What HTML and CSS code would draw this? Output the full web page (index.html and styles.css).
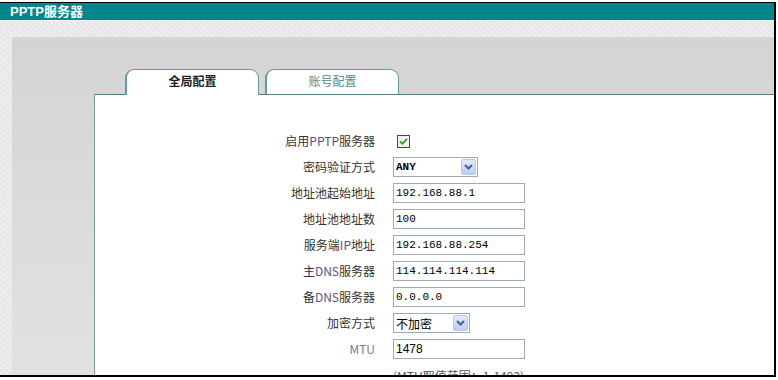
FILE: index.html
```html
<!DOCTYPE html>
<html lang="zh-cn">
  <head>
    <meta charset="utf-8">
    <title>PPTP服务器</title>
    <link rel="stylesheet" href="styles.css">
  </head>
  <body>
    <div class="frame">
      <div class="title">PPTP服务器</div>
      <div class="page">
        <div class="panel">
          <div class="tabs">
            <div class="tab tab-on">全局配置</div>
            <div class="tab">账号配置</div>
          </div>
          <div class="content">
            <div class="form">
              <div class="lbl">启用<span class="en">PPTP</span>服务器</div>
              <div class="fld">
                <span class="chk">
                  <svg width="13" height="13" viewBox="0 0 13 13">
                    <rect x="0.5" y="0.5" width="12" height="12" fill="#f2f2ee" stroke="#2a4f72"/>
                    <path d="M3 6.3l2.4 2.5L10 3.8" fill="none" stroke="#22a022" stroke-width="1.8"/>
                  </svg>
                </span>
              </div>

              <div class="lbl">密码验证方式</div>
              <div class="fld">
                <span class="sel sel-auth">
                  <select class="sel-box sel-any"><option>ANY</option><option>PAP</option><option>CHAP</option></select>
                  <span class="sel-btn">
                    <svg width="9" height="6" viewBox="0 0 9 6"><path d="M1 1l3.5 3.5L8 1" fill="none" stroke="#4d6185" stroke-width="2"/></svg>
                  </span>
                </span>
              </div>

              <div class="lbl">地址池起始地址</div>
              <div class="fld"><input class="txt" type="text" value="192.168.88.1"></div>

              <div class="lbl">地址池地址数</div>
              <div class="fld"><input class="txt" type="text" value="100"></div>

              <div class="lbl">服务端<span class="en">IP</span>地址</div>
              <div class="fld"><input class="txt" type="text" value="192.168.88.254"></div>

              <div class="lbl">主<span class="en">DNS</span>服务器</div>
              <div class="fld"><input class="txt" type="text" value="114.114.114.114"></div>

              <div class="lbl">备<span class="en">DNS</span>服务器</div>
              <div class="fld"><input class="txt" type="text" value="0.0.0.0"></div>

              <div class="lbl">加密方式</div>
              <div class="fld">
                <span class="sel sel-enc">
                  <select class="sel-box"><option>不加密</option><option>MPPE</option></select>
                  <span class="sel-btn">
                    <svg width="9" height="6" viewBox="0 0 9 6"><path d="M1 1l3.5 3.5L8 1" fill="none" stroke="#4d6185" stroke-width="2"/></svg>
                  </span>
                </span>
              </div>

              <div class="lbl"><span class="en en-mtu">MTU</span></div>
              <div class="fld"><input class="txt txt-sans" type="text" value="1478"></div>

              <div class="lbl"></div>
              <div class="fld hint">(MTU取值范围：1-1492)</div>
            </div>
          </div>
        </div>
      </div>
    </div>
  </body>
</html>
```

FILE: styles.css
```css
body {
  margin: 0;
  background: #fff;
  font-family: "Noto Sans CJK SC", sans-serif;
}
.frame {
  margin-top: 2px;
  width: 774px;
  height: 372px;
  border-top: 1px solid #000;
  border-right: 2px solid #000;
  border-bottom: 2px solid #000;
  overflow: hidden;
  display: flex;
  flex-direction: column;
}
.title {
  height: 20px;
  padding-left: 10px;
  background: #00868b;
  border-bottom: 1px solid #eef8f8;
  color: #fff;
  font: bold 13px/17px "Liberation Sans", "Noto Sans CJK SC", sans-serif;
}
.page {
  flex: 1;
  display: flex;
  padding: 16px 0 0 12px;
  background: repeating-linear-gradient(45deg, #e6e6e6 0 2px, #eeeeee 2px 4px);
}
.panel {
  flex: 1;
  display: flex;
  flex-direction: column;
  padding: 32px 0 0 82px;
  background: linear-gradient(#d4d4d4, #e2e2e0);
}
.tabs {
  display: flex;
  align-items: flex-start;
  gap: 6px;
  margin-left: 31px;
  height: 26px;
  margin-bottom: -1px;
}
.tab {
  box-sizing: border-box;
  width: 134px;
  height: 26px;
  border: 1px solid #5f9e9e;
  border-left-width: 2px;
  border-bottom-color: #587e7e;
  border-radius: 9px 9px 0 0;
  background: #fff;
  text-align: center;
  font-size: 12px;
  line-height: 22px;
  color: #5a8c8c;
}
.tab-on {
  position: relative;
  z-index: 1;
  border-bottom: none;
  font-weight: bold;
  color: #222;
}
.content {
  flex: 1;
  background: #fff;
  border-top: 1px solid #587e7e;
  border-left: 1px solid #7a9e9e;
  padding-top: 33px;
}
.form {
  display: grid;
  grid-template-columns: 280px 132px;
  grid-auto-rows: 26px;
  column-gap: 18px;
  align-items: center;
}
.lbl {
  text-align: right;
  font-size: 12px;
  line-height: 14px;
  color: #333;
  white-space: nowrap;
}
.en {
  color: #5e5080;
}
.en-mtu {
  color: #8873a4;
}
.fld {
  display: flex;
  align-items: center;
  height: 26px;
}
.chk {
  display: flex;
  margin-left: 4px;
}
.txt {
  box-sizing: border-box;
  width: 132px;
  height: 20px;
  margin: 0;
  padding: 0 2px;
  border: 1px solid #a0aab4;
  font: 11px "Liberation Mono", monospace;
  color: #000;
  outline: none;
}
.txt-sans {
  font: 12px "Liberation Sans", sans-serif;
}
.sel {
  box-sizing: border-box;
  display: flex;
  align-items: center;
  height: 20px;
  border: 1px solid #a0aab4;
  background: #fff;
}
.sel-auth {
  width: 85px;
}
.sel-enc {
  width: 77px;
}
.sel-box {
  flex: 1;
  min-width: 0;
  height: 18px;
  margin: 0;
  padding: 0 0 0 2px;
  border: none;
  background: transparent;
  appearance: none;
  -webkit-appearance: none;
  outline: none;
  font: 12px "Noto Sans CJK SC", sans-serif;
  color: #000;
}
.sel-any {
  font: bold 11px "Liberation Mono", monospace;
}
.sel-btn {
  box-sizing: border-box;
  display: flex;
  align-items: center;
  justify-content: center;
  width: 15px;
  height: 16px;
  margin-right: 1px;
  border: 1px solid #b7c9ec;
  border-radius: 2px;
  background: linear-gradient(#e2ebfc, #b9cdf3);
}
.hint {
  font-size: 12px;
  color: #555;
  white-space: nowrap;
}
```
